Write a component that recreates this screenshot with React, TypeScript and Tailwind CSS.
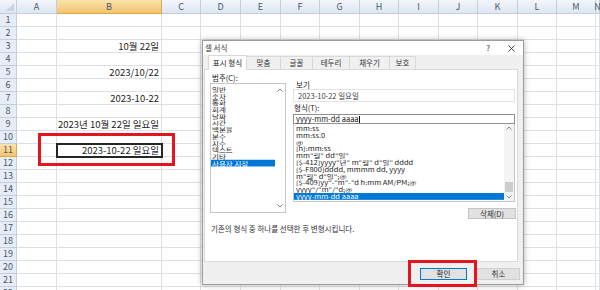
import React from "react";

const LETTERS = ["A", "B", "C", "D", "E", "F", "G", "H", "I", "J", "K", "L", "M", "N"];

const VALUES: Record<number, string> = {
  3: "10월 22일",
  5: "2023/10/22",
  7: "2023-10-22",
  9: "2023년 10월 22일 일요일",
  11: "2023-10-22 일요일",
};

const CATEGORIES = ["일반", "숫자", "통화", "회계", "날짜", "시간", "백분율", "분수", "지수", "텍스트", "기타", "사용자 지정"];

const FORMATS = [
  "mm:ss",
  "mm:ss.0",
  "@",
  "[h]:mm:ss",
  'mm"월" dd"일"',
  '[$-412]yyyy"년" m"월" d"일" dddd',
  "[$-F800]dddd, mmmm dd, yyyy",
  'm"월" d"일";@',
  '[$-409]yy"-"m"-"d h:mm AM/PM;@',
  'yyyy"/"m"/"d;@',
  "yyyy-mm-dd aaaa",
];

const TABS = [
  { label: "표시 형식", w: "w-[39px]" },
  { label: "맞춤", w: "w-[34px]" },
  { label: "글꼴", w: "w-[32px]" },
  { label: "테두리", w: "w-[37px]" },
  { label: "채우기", w: "w-[40px]" },
  { label: "보호", w: "w-[26px]" },
];

function Chevron({ up }: { up?: boolean }) {
  return (
    <svg width="6" height="4" viewBox="0 0 6 4" className="block">
      <path d={up ? "M0.5 3.5 L3 1 L5.5 3.5" : "M0.5 0.5 L3 3 L5.5 0.5"} fill="none" stroke="#8a8a8a" strokeWidth="1" />
    </svg>
  );
}

function Sheet() {
  const rows = Array.from({ length: 22 }, (_, i) => i + 1);
  return (
    <div className="grid grid-cols-[17px_40px_105px_39px_40px_40px_39px_40px_39px_40px_39px_40px_39px_39px_4px] grid-rows-[14px_repeat(22,13px)]">
      {/* corner */}
      <div className="relative bg-gradient-to-b from-[#f3f6fb] to-[#dde6f2] border-r border-b border-[#c3cfdf]">
        <svg width="8" height="8" viewBox="0 0 8 8" className="absolute right-[2px] bottom-[2px]">
          <path d="M8 0 L8 8 L0 8 Z" fill="#c9d4e2" />
        </svg>
      </div>
      {LETTERS.map((l) => (
        <div
          key={l}
          className={
            "flex items-center justify-center text-[9px] text-[#4a586b] border-r border-b " +
            (l === "B"
              ? "bg-gradient-to-b from-[#fbe2ac] to-[#f3c46a] border-[#d9a94e]"
              : "bg-gradient-to-b from-[#f3f6fb] to-[#dde6f2] border-[#c3cfdf]")
          }
        >
          {l}
        </div>
      ))}
      {rows.map((r) => (
        <React.Fragment key={r}>
          <div
            className={
              "flex items-center justify-center text-[9px] text-[#4a586b] border-r border-b " +
              (r === 11 ? "bg-gradient-to-b from-[#fbe2ac] to-[#f3c46a] border-[#d9a94e]" : "bg-[#e6edf7] border-[#c3cfdf]")
            }
          >
            {r}
          </div>
          {LETTERS.map((l) => (
            <div
              key={l}
              className={
                "flex items-center justify-end pr-[2px] text-[9.5px] text-[#1e1e1e] whitespace-nowrap border-r border-b border-[#dde1e6] bg-white " +
                (l === "B" && r === 11 ? "relative z-10 outline-2 outline-[#262626] -outline-offset-1" : "")
              }
            >
              {l === "B" ? VALUES[r] : null}
            </div>
          ))}
        </React.Fragment>
      ))}
    </div>
  );
}

function FormatDialog() {
  return (
    <div className="absolute left-[202px] top-[40px] w-[322px] h-[245px] flex flex-col border border-[#9c9c9c] bg-[#f0f0f0] shadow-[0_0_6px_rgba(0,0,0,0.3)] text-[7.5px] text-[#222]">
      {/* title bar */}
      <div className="h-[14px] flex items-center bg-white pl-[2px] pr-[8px]">
        <span className="text-[7.5px] text-[#333]">셀 서식</span>
        <span className="ml-auto text-[8px] text-[#333]">?</span>
        <svg width="7" height="7" viewBox="0 0 7 7" className="ml-[18px]">
          <path d="M0.5 0.5 L6.5 6.5 M6.5 0.5 L0.5 6.5" stroke="#333" strokeWidth="0.9" />
        </svg>
      </div>

      {/* tabs */}
      <div className="h-[14px] flex pl-[5px]">
        {TABS.map((t, i) => (
          <div
            key={t.label}
            className={
              "flex items-center justify-center " +
              t.w +
              (i === 0
                ? " bg-white border-l border-t border-r border-[#d9d9d9] -mb-px relative z-10"
                : " mt-[1px] border-t border-r border-[#d9d9d9] text-[#333]")
            }
          >
            {t.label}
          </div>
        ))}
      </div>

      {/* tab page */}
      <div className="h-[193px] ml-[1px] mr-[5px] bg-white border border-[#d9d9d9] flex flex-col pl-[5px]">
        <div className="flex">
          {/* category column */}
          <div className="w-[76px] flex flex-col pt-[3px]">
            <div className="h-[9px] leading-[9px] pl-[2px]">범주(C):</div>
            <div className="mt-[1px] h-[130px] border border-[#c7c7c7] flex">
              <div className="flex-1 pt-[1.5px] overflow-hidden">
                <div className="flex flex-col origin-top scale-y-[0.745] text-[7.5px] leading-[9px]">
                  {CATEGORIES.map((c) => (
                    <div
                      key={c}
                      className={
                        "h-[9px] pl-[1px] whitespace-nowrap " + (c === "사용자 지정" ? "bg-[#0078d7] text-white" : "")
                      }
                    >
                      {c}
                    </div>
                  ))}
                </div>
              </div>
              <div className="w-[10px] flex flex-col items-center justify-between py-[4px]">
                <Chevron up />
                <Chevron />
              </div>
            </div>
          </div>

          {/* format column */}
          <div className="ml-[7px] w-[222px] flex flex-col pt-[11px]">
            <div className="h-[8px] leading-[8px] pl-[3px]">보기</div>
            <div className="h-[13px] border border-[#e2e2e2] flex items-center pl-[4px] text-[#444]">
              2023-10-22 일요일
            </div>
            <div className="mt-[2px] h-[8px] leading-[8px] pl-[1px]">형식(T):</div>
            <div className="mt-[2px] h-[10px] border border-[#8f8f8f] flex items-center pl-[2px]">
              yyyy-mm-dd aaaa<span className="ml-[0.5px] w-px h-[7px] bg-[#111]" />
            </div>
            <div className="h-[78px] border border-t-0 border-[#c7c7c7] flex">
              <div className="flex-1 pt-[1px] overflow-hidden">
                <div className="flex flex-col origin-top scale-y-[0.756] text-[7.5px] leading-[9px]">
                  {FORMATS.map((f, i) => (
                    <div
                      key={f}
                      className={
                        "h-[9px] pl-[2px] whitespace-nowrap " +
                        (i === FORMATS.length - 1 ? "bg-[#0078d7] text-white" : "")
                      }
                    >
                      {f}
                    </div>
                  ))}
                </div>
              </div>
              <div className="w-[10px] flex flex-col items-center bg-[#f4f4f4] py-[2px]">
                <Chevron up />
                <div className="mt-auto w-[8px] h-[10px] bg-[#cdcdcd]" />
                <div className="mt-[3px]">
                  <Chevron />
                </div>
              </div>
            </div>
            <div className="mt-[6px] self-end mr-[-1px] w-[48px] h-[11px] flex items-center justify-center bg-[#e1e1e1] border border-[#c4c4c4] text-[#333]">
              삭제(D)
            </div>
          </div>
        </div>
        <div className="mt-[6px] h-[8px] leading-[8px] pl-[1px] text-[#333]">
          기존의 형식 중 하나를 선택한 후 변형시킵니다.
        </div>
      </div>

      {/* bottom buttons */}
      <div className="flex justify-end gap-[10px] pr-[3px] pt-[6px]">
        <div className="w-[47px] h-[12px] flex items-center justify-center bg-[#e1e1e1] border border-[#0078d7]">확인</div>
        <div className="w-[43px] h-[12px] flex items-center justify-center bg-[#e1e1e1] border border-[#cfcfcf] text-[#333]">
          취소
        </div>
      </div>
    </div>
  );
}

export default function App() {
  return (
    <div className="relative w-[600px] h-[290px] overflow-hidden bg-white font-['Noto_Sans_CJK_KR','Liberation_Sans',sans-serif]">
      <Sheet />
      <div className="absolute left-[38px] top-[133px] w-[137px] h-[33px] border-[3px] border-[#e3161d] z-20" />
      <FormatDialog />
      <div className="absolute left-[408px] top-[260px] w-[69px] h-[27px] border-[3px] border-[#e3161d] z-30" />
    </div>
  );
}
